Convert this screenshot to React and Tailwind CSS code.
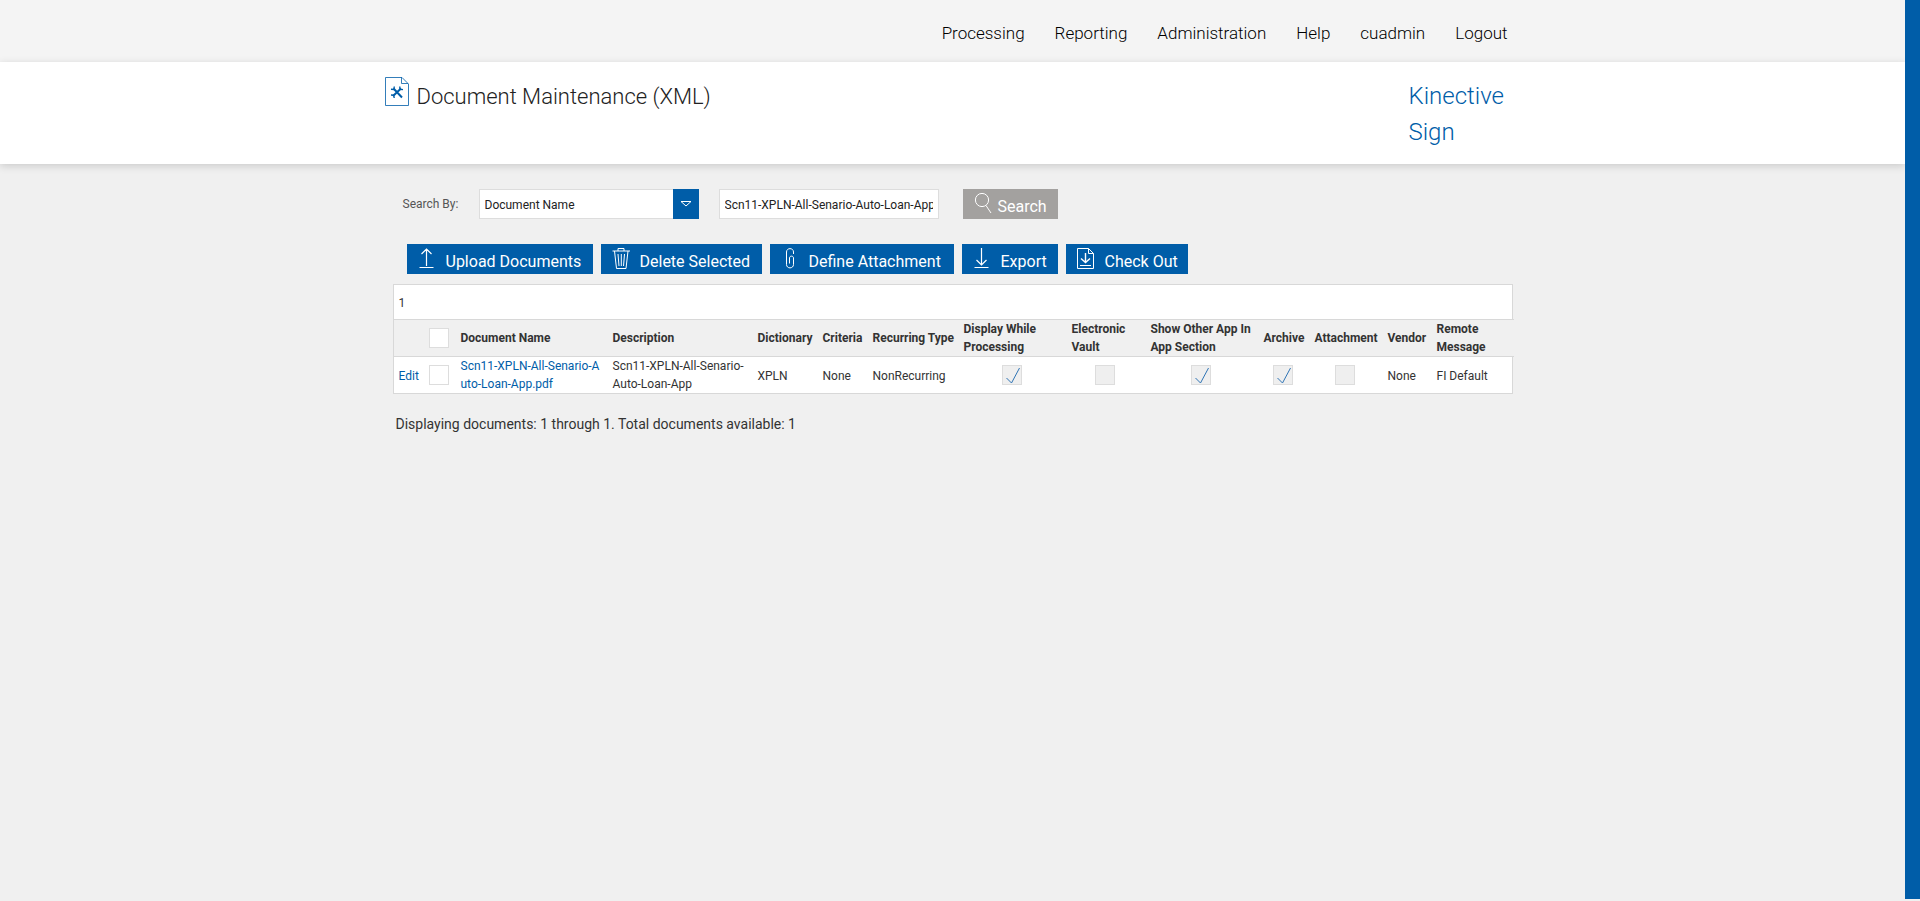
import React from "react";

const navLinks = ["Processing", "Reporting", "Administration", "Help", "cuadmin", "Logout"];

const columns = [
  { label: "", width: "w-[31px]" },
  { label: "select", width: "w-[31px]" },
  { label: "Document Name", width: "w-[152px]" },
  { label: "Description", width: "w-[145px]" },
  { label: "Dictionary", width: "w-[65px]" },
  { label: "Criteria", width: "w-[50px]" },
  { label: "Recurring Type", width: "w-[91px]" },
  { label: "Display While Processing", width: "w-[108px]" },
  { label: "Electronic Vault", width: "w-[79px]" },
  { label: "Show Other App In App Section", width: "w-[113px]" },
  { label: "Archive", width: "w-[51px]" },
  { label: "Attachment", width: "w-[73px]" },
  { label: "Vendor", width: "w-[49px]" },
  { label: "Remote Message", width: "w-[82px]" },
];

const documents = [
  {
    file: "Scn11-XPLN-All-Senario-Auto-Loan-App.pdf",
    description: "Scn11-XPLN-All-Senario-Auto-Loan-App",
    dictionary: "XPLN",
    criteria: "None",
    recurring: "NonRecurring",
    flags: [
      { name: "Display While Processing", on: true },
      { name: "Electronic Vault", on: false },
      { name: "Show Other App In App Section", on: true },
      { name: "Archive", on: true },
      { name: "Attachment", on: false },
    ],
    vendor: "None",
    remote: "FI Default",
  },
];

function Icon({ children }) {
  return (
    <svg width="20" height="22" viewBox="0 0 20 22" fill="none" stroke="currentColor" aria-hidden="true">
      {children}
    </svg>
  );
}

function DocumentIcon() {
  return (
    <svg width="24" height="29" viewBox="0 0 24 29" fill="none" stroke="#005da8" aria-hidden="true">
      <path d="M0.5 0.5H17L23.5 7V28.5H0.5Z" strokeWidth="0.8" />
      <path d="M16.5 0.5V6.5H23" strokeWidth="0.8" />
      <path d="M8.5 11.5L17 20.5M16 11.5L8 19" strokeWidth="2" />
      <path
        d="M6 12.2L8.8 12.5L9.3 9.5M14.8 9.5L15 12.3L18 12.6M6 18L8.7 18.2L9.2 21"
        strokeWidth="1.4"
      />
    </svg>
  );
}

function ActionButton({ label, icon, width }) {
  return (
    <button
      type="button"
      className={`flex h-[30px] items-start bg-[#005da8] pl-[11px] text-[16px] whitespace-nowrap text-white ${width}`}
    >
      <span className="mt-1 w-7 shrink-0">{icon}</span>
      <span className="leading-[35px]">{label}</span>
    </button>
  );
}

function CheckBox({ label, checked = false, disabled = false }) {
  return (
    <span className="relative inline-block size-5 align-middle">
      <input
        type="checkbox"
        aria-label={label}
        defaultChecked={checked}
        disabled={disabled}
        className="peer block size-5 appearance-none border border-[#dddddd] bg-white disabled:bg-[#efefef]"
      />
      <svg
        className="pointer-events-none absolute inset-0 hidden peer-checked:block"
        width="20"
        height="20"
        viewBox="0 0 20 20"
        fill="none"
        stroke="#2f74b5"
        aria-hidden="true"
      >
        <path d="M4.5 13L9.5 18L17.5 3" />
      </svg>
    </span>
  );
}

function Header() {
  return (
    <header>
      <div className="bg-[#f4f4f4]">
        <nav className="mx-auto flex h-[62px] max-w-[1140px] items-center justify-end gap-[30px] px-[15px] pt-1.5 text-[17px] font-light text-black">
          {navLinks.map((link) => (
            <a key={link} href="#">{link}</a>
          ))}
        </nav>
      </div>
      <div className="bg-white shadow-[0_2px_8px_rgba(0,0,0,0.16)]">
        <div className="mx-auto flex h-[102px] max-w-[1140px] items-start justify-between pr-[15px] pl-0.5">
          <div className="flex items-start gap-2 pt-[15px]">
            <DocumentIcon />
            <h1 className="text-[22px] leading-[40px] font-light text-[#222222]">Document Maintenance (XML)</h1>
          </div>
          <a href="#" className="w-[99px] pt-4 text-[24px] leading-[36px] font-light text-[#005da8]">
            Kinective Sign
          </a>
        </div>
      </div>
    </header>
  );
}

function SearchBar() {
  return (
    <form className="flex items-center pl-[10px] text-[12px]" onSubmit={(e) => e.preventDefault()}>
      <label htmlFor="searchBy" className="w-[76px] text-[#555555]">Search By:</label>
      <div className="relative mr-5 h-[30px] w-[220px]">
        <select
          id="searchBy"
          className="h-full w-full appearance-none border border-[#dddddd] bg-white pt-0.5 pl-[5px] text-[12px] text-[#222222]"
        >
          <option>Document Name</option>
        </select>
        <span className="pointer-events-none absolute top-0 right-0 flex h-full w-[26px] items-center justify-center bg-[#005da8]">
          <svg width="12" height="6" viewBox="0 0 12 6" fill="none" stroke="white" aria-hidden="true">
            <path d="M1 0.5H11L6 5Z" />
          </svg>
        </span>
      </div>
      <input
        type="text"
        aria-label="Search text"
        defaultValue="Scn11-XPLN-All-Senario-Auto-Loan-App"
        className="mr-6 h-[30px] w-[220px] border border-[#dddddd] bg-white px-[5px] pt-0.5 text-[12px] text-[#222222]"
      />
      <button type="submit" className="flex h-[30px] w-[95px] items-start bg-[#a3a19f] pl-[11px] text-[16px] text-white">
        <span className="mt-1 w-6 shrink-0">
          <Icon>
            <circle cx="8" cy="7" r="6.6" />
            <path d="M12 12.5L17 20" />
          </Icon>
        </span>
        <span className="leading-[35px]">Search</span>
      </button>
    </form>
  );
}

function Actions() {
  return (
    <div className="mt-[25px] flex gap-2 pl-[14px]">
      <ActionButton
        label="Upload Documents"
        width="w-[186px]"
        icon={
          <Icon>
            <path d="M8.5 18V1M3.5 6L8.5 1L13.5 6M1.5 19.5H15.5" strokeWidth="1.2" />
          </Icon>
        }
      />
      <ActionButton
        label="Delete Selected"
        width="w-[161px]"
        icon={
          <Icon>
            <path d="M0.5 3H18M6 3V0.5H12V3M2.5 3L4.5 20.5H14L16 3M6 6L7 18M9.3 6V18M12.5 6L11.5 18" />
          </Icon>
        }
      />
      <ActionButton
        label="Define Attachment"
        width="w-[184px]"
        icon={
          <Icon>
            <path d="M12.5 6V4C12.5 -0.5 5.5 -0.5 5.5 4V16.5C5.5 21 12.5 21 12.5 16.5V10C12.5 7.5 8.5 7.5 8.5 10V15.5" />
          </Icon>
        }
      />
      <ActionButton
        label="Export"
        width="w-[96px]"
        icon={
          <Icon>
            <path d="M8.5 0V17M3.5 12L8.5 17L13.5 12M1.5 19.5H15.5" strokeWidth="1.2" />
          </Icon>
        }
      />
      <ActionButton
        label="Check Out"
        width="w-[122px]"
        icon={
          <Icon>
            <path d="M0.5 0.5H11.5L16.5 5.5V20.5H0.5ZM11.5 0.5V5.5H16.5M3 17.5H14" />
            <path d="M8.5 5V14.5M4 10.5L8.5 14.5L13 10.5" strokeWidth="1.4" />
          </Icon>
        }
      />
    </div>
  );
}

function DocumentsTable() {
  return (
    <div className="mt-[10px] border border-[#d8d8d8] bg-white text-[12px] leading-[18px] text-[#333333]">
      <div className="flex h-[34px] items-center px-[5px] pt-0.5">1</div>
      <table className="w-full table-fixed border-collapse text-left">
        <thead>
          <tr className="h-[37px] border-y border-[#d8d8d8] bg-[#f0f0f0]">
            {columns.map((col) => (
              <th
                key={col.label}
                className={`${col.width} py-0 pr-0.5 font-bold ${col.label === "select" ? "pl-1" : "pl-[5px]"}`}
              >
                {col.label === "select" ? <CheckBox label="Select all documents" /> : col.label}
              </th>
            ))}
          </tr>
        </thead>
        <tbody>
          {documents.map((doc) => (
            <tr key={doc.file} className="h-[36px]">
              <td className="pt-0.5 pr-0.5 pl-[5px]">
                <a href="#" className="text-[#005da8]">Edit</a>
              </td>
              <td className="px-1"><CheckBox label={`Select ${doc.file}`} /></td>
              <td className="pr-0.5 pl-[5px] break-all">
                <a href="#" className="text-[#005da8]">{doc.file}</a>
              </td>
              <td className="pr-0.5 pl-[5px]">{doc.description}</td>
              <td className="pt-0.5 pr-0.5 pl-[5px]">{doc.dictionary}</td>
              <td className="pt-0.5 pr-0.5 pl-[5px]">{doc.criteria}</td>
              <td className="pt-0.5 pr-0.5 pl-[5px]">{doc.recurring}</td>
              {doc.flags.map((flag) => (
                <td key={flag.name} className="pr-1.5 pl-1 text-center">
                  <CheckBox label={flag.name} checked={flag.on} disabled />
                </td>
              ))}
              <td className="pt-0.5 pr-0.5 pl-[5px]">{doc.vendor}</td>
              <td className="pt-0.5 pr-0.5 pl-[5px]">{doc.remote}</td>
            </tr>
          ))}
        </tbody>
      </table>
    </div>
  );
}

function App() {
  return (
    <div className="flex min-h-screen bg-[#f0f0f0] font-[Roboto,sans-serif]">
      <div className="min-w-0 flex-1">
        <Header />
        <main className="mx-auto max-w-[1120px] pt-[25px]">
          <SearchBar />
          <Actions />
          <DocumentsTable />
          <p className="mt-5 px-[3px] text-[14px] leading-[20px] text-[#333333]">
            Displaying documents: 1 through 1. Total documents available: 1
          </p>
        </main>
      </div>

      {/* Right edge strip */}
      <div className="mb-[2px] w-[15px] bg-[#005da8]" />
    </div>
  );
}

export default App;
